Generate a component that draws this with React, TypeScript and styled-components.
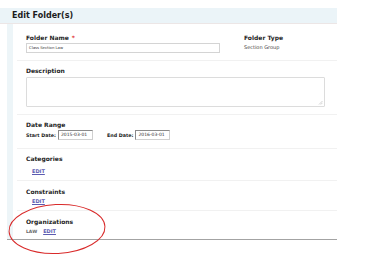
import styled, { createGlobalStyle } from 'styled-components'

const Global = createGlobalStyle`
  html, body {
    margin: 0;
    padding: 0;
    background: #ffffff;
  }
  body {
    font-family: 'DejaVu Sans', Verdana, sans-serif;
    color: #222222;
  }
`

const Page = styled.div`
  position: relative;
  width: 384px;
  height: 276px;
  padding-top: 8px;
  box-sizing: border-box;
`

const Header = styled.div`
  width: 337px;
  height: 16px;
  box-sizing: border-box;
  padding-left: 12px;
  background: #ebf4f8;
  border-bottom: 1px solid #ece6e6;
  font-size: 8px;
  font-weight: 700;
  line-height: 15px;
  color: #1c1c1c;
`

const Frame = styled.div`
  margin-left: 7px;
  width: 330px;
  border-bottom: 1px solid #a3a3a3;
`

const Body = styled.div`
  border-left: 6px solid #edf5f8;
  background: #ffffff;
`

const Section = styled.div<{ top: number; bottom: number; first?: boolean }>`
  margin-left: 4px;
  padding: ${(p) => p.top}px 0 ${(p) => p.bottom}px 9px;
  border-top: ${(p) => (p.first ? 'none' : '1px solid #f1f1f1')};
`

const Row = styled.div`
  display: flex;
  align-items: flex-start;
`

const Field = styled.div<{ width?: number }>`
  width: ${(p) => (p.width ? `${p.width}px` : 'auto')};
`

const Label = styled.div`
  font-size: 6px;
  font-weight: 700;
  line-height: 8px;
  height: 8px;
  white-space: nowrap;
  color: #1e1e1e;
`

const Required = styled.span`
  color: #e03030;
  margin-left: 3px;
`

const TextBox = styled.div<{ width: number }>`
  width: ${(p) => p.width}px;
  height: 10px;
  margin-top: 1px;
  box-sizing: border-box;
  border: 1px solid #d4d4d4;
  padding-left: 2px;
  font-size: 3.8px;
  line-height: 8px;
  color: #333333;
`

const Value = styled.div`
  font-size: 5px;
  line-height: 8px;
  color: #444444;
  margin-top: 1px;
`

const TextArea = styled.div`
  position: relative;
  width: 299px;
  height: 30px;
  margin-top: 2px;
  box-sizing: border-box;
  border: 1px solid #dcdcdc;
  border-radius: 1px;
`

const Grip = styled.svg`
  position: absolute;
  right: 1px;
  bottom: 1px;
`

const DateRow = styled.div`
  display: flex;
  align-items: center;
  margin-top: 1px;
  height: 10px;
`

const DateLabel = styled.span<{ gap?: number }>`
  font-size: 4.8px;
  font-weight: 700;
  color: #222222;
  margin-left: ${(p) => p.gap || 0}px;
  margin-right: 2px;
`

const DateBox = styled.div`
  width: 35px;
  height: 10px;
  box-sizing: border-box;
  border: 1px solid #8a8a8a;
  border-right-color: #d0d0d0;
  border-bottom-color: #d0d0d0;
  padding-left: 2px;
  font-size: 4.5px;
  line-height: 8px;
  color: #333333;
`

const Links = styled.div<{ indent?: number; gap?: number }>`
  display: flex;
  align-items: center;
  height: 8px;
  margin-top: ${(p) => p.gap ?? 1}px;
  padding-left: ${(p) => p.indent || 0}px;
`

const Plain = styled.span`
  font-size: 4.5px;
  font-weight: 700;
  color: #6a6a6a;
  margin-right: 6px;
`

const EditLink = styled.a`
  font-size: 5px;
  font-weight: 700;
  color: #5b5bb0;
  text-decoration: underline;
  cursor: pointer;
`

const Annotation = styled.svg`
  position: absolute;
  left: 0;
  top: 0;
  pointer-events: none;
`

const App = () => {
  return (
    <>
      <Global />
      <Page>
        <Header>Edit Folder(s)</Header>
        <Frame>
          <Body>
            <Section first top={10} bottom={7}>
              <Row>
                <Field width={218}>
                  <Label>
                    Folder Name<Required>*</Required>
                  </Label>
                  <TextBox width={194}>Class Section Law</TextBox>
                </Field>
                <Field>
                  <Label>Folder Type</Label>
                  <Value>Section Group</Value>
                </Field>
              </Row>
            </Section>
            <Section top={6} bottom={7}>
              <Label>Description</Label>
              <TextArea>
                <Grip width="5" height="5" viewBox="0 0 5 5">
                  <path d="M4.5 1 L1 4.5 M4.5 2.8 L2.8 4.5" stroke="#b5b5b5" strokeWidth="0.6" />
                </Grip>
              </TextArea>
            </Section>
            <Section top={6} bottom={8}>
              <Label>Date Range</Label>
              <DateRow>
                <DateLabel>Start Date:</DateLabel>
                <DateBox>2015-03-01</DateBox>
                <DateLabel gap={14}>End Date:</DateLabel>
                <DateBox>2016-03-01</DateBox>
              </DateRow>
            </Section>
            <Section top={6} bottom={5}>
              <Label>Categories</Label>
              <Links indent={6} gap={4}>
                <EditLink>EDIT</EditLink>
              </Links>
            </Section>
            <Section top={7} bottom={5}>
              <Label>Constraints</Label>
              <Links indent={6}>
                <EditLink>EDIT</EditLink>
              </Links>
            </Section>
            <Section top={7} bottom={4}>
              <Label>Organizations</Label>
              <Links>
                <Plain>LAW</Plain>
                <EditLink>EDIT</EditLink>
              </Links>
            </Section>
          </Body>
        </Frame>
        <Annotation width="384" height="276" viewBox="0 0 384 276">
          <ellipse
            cx="57"
            cy="229"
            rx="48"
            ry="24.5"
            fill="none"
            stroke="#d92b2b"
            strokeWidth="1"
            transform="rotate(-3 57 229)"
          />
        </Annotation>
      </Page>
    </>
  )
}

export default App
